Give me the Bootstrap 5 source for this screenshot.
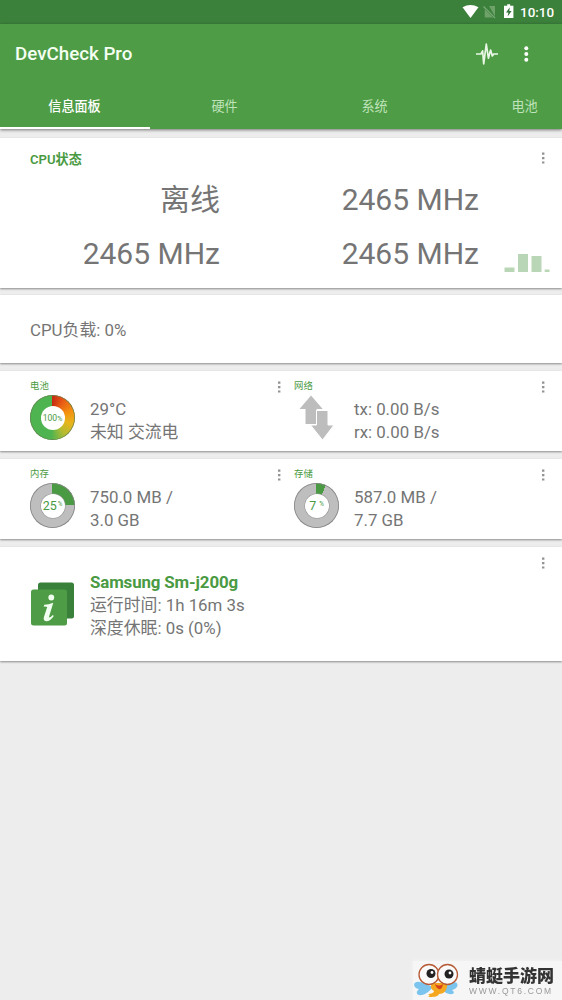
<!DOCTYPE html>
<html lang="zh-CN">
<head>
<meta charset="utf-8">
<meta name="viewport" content="width=device-width, initial-scale=1">
<title>DevCheck Pro</title>
<link href="https://cdn.jsdelivr.net/npm/bootstrap@5.3.0/dist/css/bootstrap.min.css" rel="stylesheet">
<style>
  body { font-family: Roboto, "Noto Sans CJK SC", sans-serif; background: #ededed; color: #757575; font-size: 16.87px; line-height: 23px; height: 1000px; overflow: hidden; }
  .statusbar { height: 24px; background: #3b803b; color: #fff; font-size: 13.4px; font-weight: 500; padding-right: 8px; }
  .topbar { height: 105px; background: #4f9c46; box-shadow: 0 1px 3px rgba(0,0,0,.5); }
  .app-title { font-size: 18.75px; font-weight: 500; color: #f4fff2; padding: 1px 0 0 15px; }
  .tab-strip { height: 45px; width: 600px; }
  .tab-strip .nav-link { width: 150px; height: 45px; padding: 0 1px 0 0; line-height: 46px; text-align: center; font-size: 13.1px; color: #bfe3ba; border-radius: 0; }
  .tab-strip .nav-link.active { color: #fff; font-weight: 500; box-shadow: inset 0 -2px #fff; }
  .panel { border: 0; border-radius: 0; color: inherit; box-shadow: 0 1px 2px rgba(0,0,0,.42); }
  .green { color: #4a9a43; }
  .head { font-size: 13.1px; font-weight: 600; line-height: 20px; }
  .device { letter-spacing: -.13px; }
  .small-head { font-size: 9.4px; line-height: 12px; padding-top: 9px; }
  .freq { font-size: 30px; line-height: 54px; }
  .kebab { right: 15px; width: 8px; height: 14px; }
  .kebab.mid { right: 11px; }
  .bars { right: 12px; bottom: 16px; }
  .half-a { width: 294px; padding-left: 30px; }
  .ring-img { width: 45px; margin-right: 15px; }
  .gauge { background: conic-gradient(#c52b12 0, #e85a14 9%, #f3920f 20%, #e8b51c 30%, #b5bb30 40%, #4eb450 51%, #4eb450 100%); width: 45px; height: 45px; border-radius: 50%; box-shadow: inset 0 0 0 .7px #66824f; }
  .hole { width: 24px; height: 24px; border-radius: 50%; background: #fff; color: #4a9a43; font-size: 8.6px; line-height: 24px; }
  .mem { background: conic-gradient(#4a9a43 0 var(--p), #bebebe var(--p)); box-shadow: inset 0 0 0 .8px #858585; }
  .mem .hole { font-size: 12.5px; box-shadow: 0 0 0 .6px #999; }
  .hole sup { font-size: 6.3px; top: -3.5px; margin-left: 1px; }
  .watermark { right: 0; bottom: 0; width: 149px; height: 39px; background: #f6f6f6; box-shadow: 0 0 4px #f6f6f6; }
  .wm-name { font: 900 17px/20px "Noto Sans CJK SC", sans-serif; color: #333; }
  .wm-url { font: 8.5px/12px "Liberation Sans", sans-serif; letter-spacing: 1.75px; color: #999; }
</style>
</head>
<body>
<svg class="d-none">
  <symbol id="dots" viewBox="0 0 8 14"><path d="M3 1.5h2.4v2.2H3zM3 6h2.4v2.2H3zM3 10.4h2.4v2.2H3z" fill="#929292"/></symbol>
</svg>

<div class="statusbar d-flex align-items-center justify-content-end">
  <svg width="54" height="24" viewBox="0 0 54 24" class="me-1">
    <path d="M.5 7.3Q8.500 2.500 16.500 7.300L8.500 18Z" fill="#fff"/>
    <path d="M27 6h6v10.500zM22.700 9.200V17.500H31z" fill="#6ea269"/><path d="M21.500 6.500 33 18" stroke="#77a974" stroke-width="1.200"/>
    <path d="M45.200 4.200h3v1.600h3.200V18H42V5.800h3.200z" fill="#fff"/><path d="M47.800 7.200 44 12.400h2.400L45.600 16.500l4-5.400h-2.300z" fill="#33713a"/>
  </svg>
  <span>10:10</span>
</div>

<header class="topbar position-relative">
  <div class="d-flex align-items-center" style="height:60px">
    <div class="app-title flex-grow-1">DevCheck Pro</div>
    <svg width="24" height="24" viewBox="0 0 24 24" fill="none" stroke="#e9f8e6" stroke-width="1.700" stroke-linejoin="round"><path d="M1 12h5l1.600-3.200L8.700 22 11.300 2l2.100 14.200 2.200-8.200 1.700 6 1.400-2H23"/></svg>
    <svg width="63" height="24" viewBox="0 0 63 24" fill="#fff"><circle cx="27.300" cy="6.300" r="2"/><circle cx="27.300" cy="12" r="2"/><circle cx="27.300" cy="17.700" r="2"/></svg>
  </div>
  <div class="overflow-hidden">
    <nav class="nav tab-strip flex-nowrap">
      <a class="nav-link active">信息面板</a>
      <a class="nav-link">硬件</a>
      <a class="nav-link">系统</a>
      <a class="nav-link">电池</a>
    </nav>
  </div>
</header>

<main>
  <section class="card panel" style="height:150px;margin-top:9px">
    <div class="head green" style="padding:12px 0 0 30px">CPU状态</div>
    <svg class="kebab position-absolute" style="top:13px"><use href="#dots"/></svg>
    <div class="d-flex freq text-end" style="margin-top:3px">
      <div style="width:220px"><div>离线</div><div>2465 MHz</div></div>
      <div style="width:259px"><div>2465 MHz</div><div>2465 MHz</div></div>
    </div>
    <svg class="bars position-absolute" width="46" height="19" fill="#b9d7b6"><path d="M.5 14.500h10V19h-10zM14 1h10v18H14zM27.500 3h10v16h-10zM40.700 16.500h4.800V19h-4.800z"/></svg>
  </section>

  <section class="card panel justify-content-center" style="height:68px;margin-top:7px;padding:2px 0 0 30px">CPU负载: 0%</section>

  <section class="card panel flex-row" style="height:80px;margin-top:8px">
    <div class="half-a position-relative">
      <div class="small-head green">电池</div>
      <svg class="kebab mid position-absolute" style="top:9px"><use href="#dots"/></svg>
      <div class="d-flex" style="padding-top:3px">
        <div class="ring-img"><div class="gauge d-flex align-items-center justify-content-center"><div class="hole text-center">100<span style="font-size:7px">%</span></div></div></div>
        <div style="margin-top:3px">29°C<br>未知 交流电</div>
      </div>
    </div>
    <div class="flex-grow-1 position-relative">
      <div class="small-head green">网络</div>
      <svg class="kebab position-absolute" style="top:9px"><use href="#dots"/></svg>
      <div class="d-flex" style="padding-top:3px">
        <svg class="ring-img" height="46" viewBox="0 0 45 46" fill="#bdbdbd"><path d="M17 .5 28.700 14H22.500V29H11.500V14H5.500z"/><path d="M22.500 15.500h11.500V30h6L28.500 45 16.500 30h6z" stroke="#fff" stroke-width="1"/></svg>
        <div style="margin-top:3px">tx: 0.00 B/s<br>rx: 0.00 B/s</div>
      </div>
    </div>
  </section>

  <section class="card panel flex-row" style="height:80px;margin-top:8px">
    <div class="half-a position-relative">
      <div class="small-head green">内存</div>
      <svg class="kebab mid position-absolute" style="top:9px"><use href="#dots"/></svg>
      <div class="d-flex" style="padding-top:3px">
        <div class="ring-img"><div class="gauge mem d-flex align-items-center justify-content-center" style="--p:24.500%"><div class="hole text-center text-nowrap">25<sup>%</sup></div></div></div>
        <div style="margin-top:3px">750.0 MB /<br>3.0 GB</div>
      </div>
    </div>
    <div class="flex-grow-1 position-relative">
      <div class="small-head green">存储</div>
      <svg class="kebab position-absolute" style="top:9px"><use href="#dots"/></svg>
      <div class="d-flex" style="padding-top:3px">
        <div class="ring-img"><div class="gauge mem d-flex align-items-center justify-content-center" style="--p:7%"><div class="hole text-center text-nowrap">7<sup style="margin-left:3px">%</sup></div></div></div>
        <div style="margin-top:3px">587.0 MB /<br>7.7 GB</div>
      </div>
    </div>
  </section>

  <section class="card panel" style="height:114px;margin-top:8px">
    <svg class="kebab position-absolute" style="top:9px"><use href="#dots"/></svg>
    <div class="d-flex" style="padding:24px 0 0 30px">
      <svg width="45" height="45" viewBox="0 0 45 45" style="margin:11px 15px 0 0">
        <rect x="8" y=".5" width="36" height="36" rx="2.500" fill="#39803b"/>
        <rect x="1" y="7.500" width="36" height="36" rx="2.500" fill="#4f9c46"/>
        <circle cx="21.300" cy="15.500" r="2.900" fill="#f1fff0"/>
        <path d="M14.200 22.800Q18.500 22.500 23.300 20.700L18.800 35.500Q20.500 35.500 22.800 33L23.800 34Q20 39.500 16 39.200 12.800 38.700 14 34.800L17.200 25Q16 24.300 13.800 24.700Z" fill="#f1fff0"/>
      </svg>
      <div><b class="green device">Samsung Sm-j200g</b><br>运行时间: 1h 16m 3s<br>深度休眠: 0s (0%)</div>
    </div>
  </section>
</main>

<div class="watermark position-fixed d-flex">
  <svg width="48" height="39" viewBox="0 0 48 39">
    <path d="M15 24C-1 15-2 27 6 28-1 34 10 39 20 26zM31 23c17-6 16 4 8 6 6 4-4 8-13-3z" fill="#7ac4ee"/>
    <path d="M19 22h15c1 8-4 11-8 11-1 3-6 3-11 3 2-1 2-2 0-3 3 0 6-1 6-3-3-2-4-4-2-8z" fill="#f4a71f"/>
    <circle cx="16" cy="13.500" r="10" fill="#fafafa" stroke="#b65a35" stroke-width="1.300"/><circle cx="34.500" cy="13.500" r="10" fill="#fafafa" stroke="#b65a35" stroke-width="1.300"/>
    <circle cx="18" cy="12.500" r="4.500" fill="#222"/><circle cx="36" cy="13" r="4.500" fill="#222"/><circle cx="19" cy="11.500" r="1.400" fill="#fff"/><circle cx="37" cy="12" r="1.400" fill="#fff"/>
    <path d="M22 23q4 3 8 0-1 6-4 5-3-1-4-5z" fill="#d7401d"/>
  </svg>
  <div style="padding:4px 0 0 8px"><div class="wm-name text-nowrap">蜻蜓手游网</div><div class="wm-url text-nowrap">WWW.QT6.COM</div></div>
</div>
<script src="https://cdn.jsdelivr.net/npm/bootstrap@5.3.0/dist/js/bootstrap.bundle.min.js"></script>
</body>
</html>
